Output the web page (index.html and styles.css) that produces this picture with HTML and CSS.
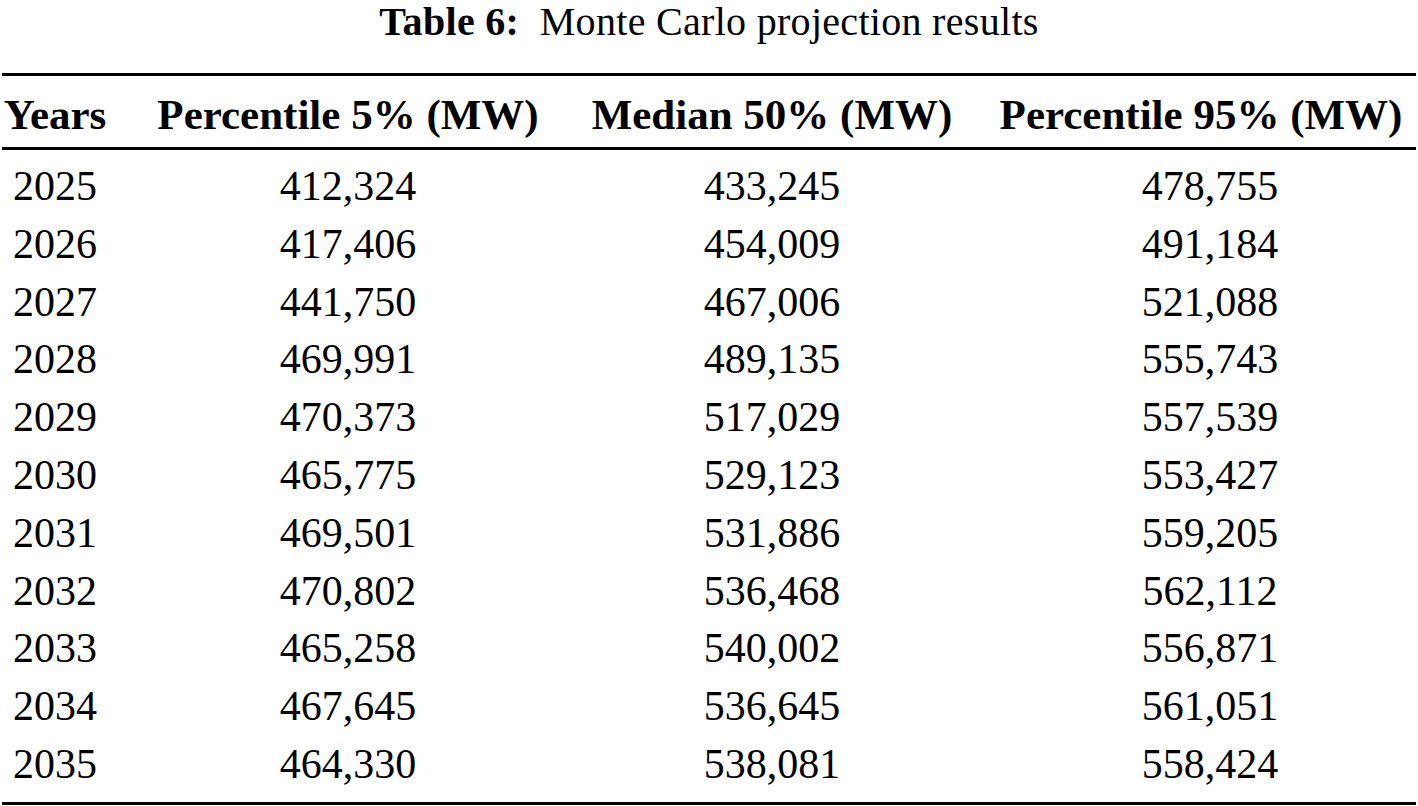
FILE: index.html
```html
<!DOCTYPE html>
<html>
<head>
<meta charset="utf-8">
<link rel="stylesheet" href="styles.css">
</head>
<body>
<div class="caption"><span class="cap-label">Table 6:</span>&nbsp; Monte Carlo projection results</div>
<table class="results">
  <colgroup>
    <col class="w1"><col class="w2"><col class="w3"><col class="w4">
  </colgroup>
  <thead>
    <tr><th>Years</th><th>Percentile 5% (MW)</th><th>Median 50% (MW)</th><th class="last">Percentile 95% (MW)</th></tr>
  </thead>
  <tbody>
    <tr class="first"><td>2025</td><td>412,324</td><td>433,245</td><td class="last">478,755</td></tr>
    <tr><td>2026</td><td>417,406</td><td>454,009</td><td class="last">491,184</td></tr>
    <tr><td>2027</td><td>441,750</td><td>467,006</td><td class="last">521,088</td></tr>
    <tr><td>2028</td><td>469,991</td><td>489,135</td><td class="last">555,743</td></tr>
    <tr><td>2029</td><td>470,373</td><td>517,029</td><td class="last">557,539</td></tr>
    <tr><td>2030</td><td>465,775</td><td>529,123</td><td class="last">553,427</td></tr>
    <tr><td>2031</td><td>469,501</td><td>531,886</td><td class="last">559,205</td></tr>
    <tr><td>2032</td><td>470,802</td><td>536,468</td><td class="last">562,112</td></tr>
    <tr><td>2033</td><td>465,258</td><td>540,002</td><td class="last">556,871</td></tr>
    <tr><td>2034</td><td>467,645</td><td>536,645</td><td class="last">561,051</td></tr>
    <tr class="end"><td>2035</td><td>464,330</td><td>538,081</td><td class="last">558,424</td></tr>
  </tbody>
</table>
</body>
</html>
```
FILE: styles.css
```css
html, body {
  margin: 0;
  padding: 0;
  background: #ffffff;
  color: #000000;
  font-family: "Liberation Serif", "Times New Roman", serif;
}
.caption {
  text-align: center;
  font-size: 40px;
  line-height: 44px;
  height: 44px;
  margin-bottom: 29px;
  letter-spacing: 0.3px;
}
.cap-label {
  font-weight: bold;
}
.results {
  margin-left: 2px;
  width: 1414px;
  table-layout: fixed;
  border-collapse: collapse;
  border-top: 3px solid #000;
  border-bottom: 3px solid #000;
  font-size: 42px;
}
.w1 { width: 106px; }
.w2 { width: 480px; }
.w3 { width: 368px; }
.w4 { width: 460px; }
.results th,
.results td {
  padding: 0;
  text-align: center;
  white-space: nowrap;
  vertical-align: top;
}
.results th {
  font-weight: bold;
  font-size: 43px;
  line-height: 40px;
  padding-top: 19px;
  padding-bottom: 12px;
  border-bottom: 3px solid #000;
}
.results td {
  line-height: 57.8px;
}
.results th.last {
  padding-left: 36px;
  padding-right: 6px;
}
.results td.last {
  padding-left: 48px;
}
.results tr.first td {
  padding-top: 8px;
}
.results tr.end td {
  padding-bottom: 8px;
}
```
